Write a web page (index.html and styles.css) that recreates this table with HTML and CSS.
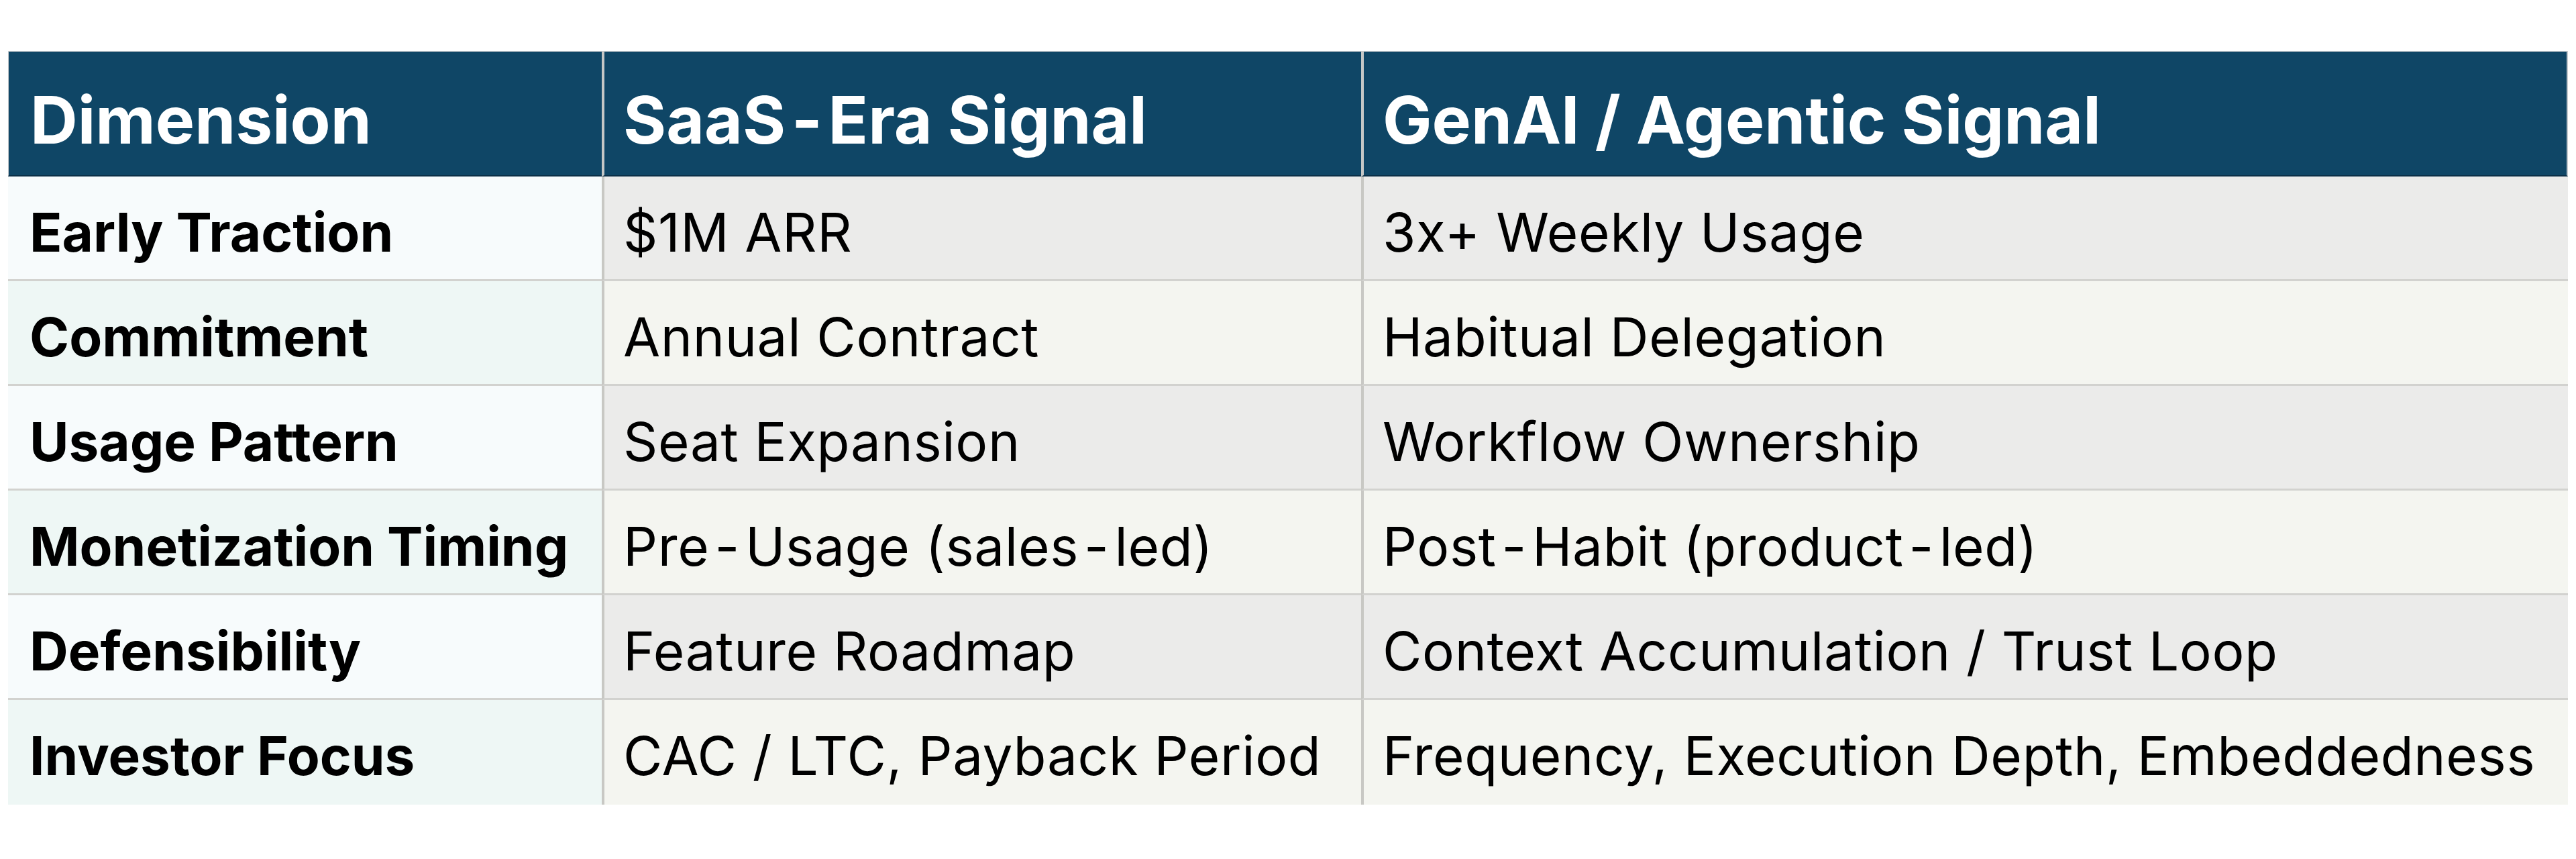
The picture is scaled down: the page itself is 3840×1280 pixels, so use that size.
FILE: index.html
```html
<!DOCTYPE html>
<html lang="en">
<head>
<meta charset="utf-8">
<title>SaaS vs GenAI Signals</title>
<link rel="stylesheet" href="styles.css">
</head>
<body>
<div class="page">
<table class="cmp">
<colgroup><col class="c1"><col class="c2"><col class="c3"></colgroup>
<thead>
<tr><th>Dimension</th><th>SaaS<span class="hy">-</span>Era Signal</th><th>GenAI / Agentic Signal</th></tr>
</thead>
<tbody>
<tr class="odd"><td class="lab">Early Traction</td><td>$1M ARR</td><td>3x+ Weekly Usage</td></tr>
<tr class="even"><td class="lab">Commitment</td><td>Annual Contract</td><td>Habitual Delegation</td></tr>
<tr class="odd"><td class="lab">Usage Pattern</td><td>Seat Expansion</td><td>Workflow Ownership</td></tr>
<tr class="even"><td class="lab">Monetization Timing</td><td>Pre<span class="hy">-</span>Usage (sales<span class="hy">-</span>led)</td><td>Post<span class="hy">-</span>Habit (product<span class="hy">-</span>led)</td></tr>
<tr class="odd"><td class="lab">Defensibility</td><td>Feature Roadmap</td><td>Context Accumulation / Trust Loop</td></tr>
<tr class="even last"><td class="lab">Investor Focus</td><td>CAC / LTC, Payback Period</td><td>Frequency, Execution Depth, Embeddedness</td></tr>
</tbody>
</table>
</div>
</body>
</html>
```
FILE: styles.css
```css
html, body {
  margin: 0;
  background: #ffffff;
}
body {
  font-family: Inter, "Noto Sans", "Liberation Sans", sans-serif;
  color: #000;
}
.page {
  padding: 76px 12px 0 12px;
}
.cmp {
  border-collapse: separate;
  border-spacing: 0;
  table-layout: fixed;
  width: 3816px;
}
.c1 { width: 885px; }
.c2 { width: 1132px; }
.c3 { width: 1799px; }

.cmp th {
  background: #0f4666;
  color: #ffffff;
  font-size: 98px;
  font-weight: 700;
  text-align: left;
  line-height: 121px;
  height: 121px;
  padding: 41px 28px 22px 28px;
  border-top: 1px solid #c9cccf;
  border-bottom: 2px solid #0b3048;
  white-space: nowrap;
}
.cmp th:first-child { border-left: 1px solid #c9cccf; padding-left: 32px; }
.cmp th:last-child { border-right: 2px solid #c2c8cc; }
.cmp th + th { border-left: 4px solid #c5c7c6; }
.cmp th .hy { margin: 0 0.09em; }

.cmp td {
  font-size: 80px;
  font-weight: 400;
  letter-spacing: 0.008em;
  line-height: 97px;
  height: 97px;
  padding: 34px 28px 22px 28px;
  border-bottom: 3px solid #d2d2cf;
  white-space: nowrap;
}
.cmp td + td { border-left: 4px solid #c8c8c4; }
.cmp td.lab { font-weight: 700; letter-spacing: 0; padding-left: 32px; }
.cmp tr.last td { border-bottom: 0; padding-bottom: 25px; }

.odd td { background: #ebebea; }
.even td { background: #f4f5f0; }
.odd td.lab { background: #f7fbfc; }
.even td.lab { background: #eef7f5; }

.hy {
  display: inline-block;
  margin: 0 0.1em;
}
```
